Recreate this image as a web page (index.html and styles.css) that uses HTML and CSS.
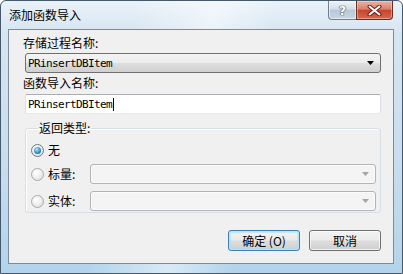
FILE: index.html
```html
<!DOCTYPE html>
<html>
<head>
<meta charset="utf-8">
<link rel="stylesheet" href="styles.css">
</head>
<body>
<div class="window">
  <div class="titlebar">
    <span class="title">添加函数导入</span>
    <div class="caption">
      <div class="cap-btn help"><span>?</span></div>
      <div class="cap-btn close">
        <svg width="15" height="11" viewBox="0 0 15 11"><path d="M2.5 1.5 L12.5 9.5 M12.5 1.5 L2.5 9.5" stroke="#6a1f14" stroke-width="4" stroke-linecap="round"/><path d="M2.5 1.5 L12.5 9.5 M12.5 1.5 L2.5 9.5" stroke="#ffffff" stroke-width="2" stroke-linecap="round"/></svg>
      </div>
    </div>
  </div>
  <div class="client">
    <div class="label">存储过程名称:</div>
    <div class="combo">
      <span class="mono">PRinsertDBItem</span>
      <svg class="arrow" width="7" height="4" viewBox="0 0 7 4"><path d="M0 0 H7 L3.5 4 Z" fill="#000"/></svg>
    </div>
    <div class="label second">函数导入名称:</div>
    <div class="textbox"><span class="mono">PRinsertDBItem</span><span class="caret"></span></div>
    <fieldset class="group">
      <legend>返回类型:</legend>
      <div class="row first">
        <span class="radio on"></span>
        <span class="rtext">无</span>
      </div>
      <div class="row">
        <span class="radio"></span>
        <span class="rtext fixed">标量:</span>
        <div class="combo disabled">
          <svg class="arrow" width="7" height="4" viewBox="0 0 7 4"><path d="M0 0 H7 L3.5 4 Z" fill="#a4a4a4"/></svg>
        </div>
      </div>
      <div class="row third">
        <span class="radio"></span>
        <span class="rtext fixed">实体:</span>
        <div class="combo disabled">
          <svg class="arrow" width="7" height="4" viewBox="0 0 7 4"><path d="M0 0 H7 L3.5 4 Z" fill="#a4a4a4"/></svg>
        </div>
      </div>
    </fieldset>
    <div class="buttons">
      <div class="btn default">确定 (O)</div>
      <div class="btn">取消</div>
    </div>
  </div>
</div>
</body>
</html>
```

FILE: styles.css
```css
html, body {
  margin: 0;
  padding: 0;
  background: #ffffff;
}
body {
  font-family: "Noto Sans CJK SC", "Noto Sans", sans-serif;
  font-size: 12px;
  color: #000;
}
.window {
  width: 403px;
  height: 274px;
  box-sizing: border-box;
  border: 1px solid #46596c;
  border-radius: 6px 6px 0 0;
  display: flex;
  flex-direction: column;
  background:
    linear-gradient(100deg, rgba(255,255,255,0) 30%, rgba(255,255,255,0.5) 48%, rgba(255,255,255,0) 62%),
    linear-gradient(180deg, #eaf2f9 0%, #d6e5f1 12%, #c8ddee 60%, #b2d4ea 100%);
}
.titlebar {
  height: 28px;
  display: flex;
  align-items: flex-start;
  flex: none;
}
.title {
  margin-top: 7px;
  margin-left: 8px;
  line-height: 14px;
  font-size: 12px;
  color: #000;
}
.caption {
  margin-left: auto;
  margin-right: 9px;
  display: flex;
}
.cap-btn {
  height: 19px;
  box-sizing: border-box;
  display: flex;
  align-items: center;
  justify-content: center;
}
.help {
  width: 28px;
  border: 1px solid #6f7f8f;
  border-top: none;
  border-right: none;
  border-radius: 0 0 0 4px;
  background: linear-gradient(180deg, #eef3f8 0%, #d4dfe9 45%, #b9c8d6 50%, #c8d6e2 100%);
  box-shadow: inset 0 0 0 1px rgba(255,255,255,0.5);
}
.help span {
  font-family: "DejaVu Sans", sans-serif;
  font-weight: bold;
  font-size: 13px;
  line-height: 13px;
  color: #ffffff;
  text-shadow: 0 0 1px #3a4a5a, 0 0 1px #3a4a5a, 0 0 1px #3a4a5a;
}
.close {
  width: 37px;
  border: 1px solid #6a2b20;
  border-top: none;
  border-radius: 0 0 4px 0;
  background: linear-gradient(180deg, #eab2a4 0%, #d9806d 45%, #c5462f 52%, #d26a50 100%);
  box-shadow: inset 0 0 0 1px rgba(255,220,210,0.45);
}
.client {
  flex: 1;
  margin: 0 8px 9px 7px;
  border: 1px solid #7d8c9a;
  background: #f0f0f0;
  display: flex;
  flex-direction: column;
  padding: 0 12px 0 16px;
}
.label {
  margin-top: 6px;
  margin-left: -2px;
  line-height: 14px;
  height: 14px;
}
.label.second {
  margin-top: 3px;
}
.mono {
  font-family: "DejaVu Sans Mono", "Liberation Mono", monospace;
  font-size: 11px;
  letter-spacing: -0.62px;
}
.combo {
  margin-top: 3px;
  height: 20px;
  box-sizing: border-box;
  border: 1px solid #707070;
  border-radius: 3px;
  background: linear-gradient(180deg, #f4f4f4 0%, #ececec 48%, #dedede 52%, #d0d0d0 100%);
  display: flex;
  align-items: center;
  padding: 0 6px 0 2px;
}
.combo .arrow {
  margin-left: auto;
}
.textbox {
  margin-top: 4px;
  height: 20px;
  box-sizing: border-box;
  border: 1px solid #abadb3;
  border-left-color: #dbdfe6;
  border-right-color: #dbdfe6;
  border-bottom-color: #e3e9ef;
  border-radius: 2px;
  background: #ffffff;
  display: flex;
  align-items: center;
  padding: 0 2px;
}
.caret {
  width: 1px;
  height: 13px;
  background: #000;
  margin-left: 1px;
}
.group {
  margin: 7px 0 0 0;
  padding: 0 4px 1px 5px;
  border: 1px solid #d5dfe5;
  border-radius: 3px;
  box-shadow: inset 1px 1px 0 #ffffff;
  min-width: 0;
}
.group legend {
  margin-left: 7px;
  padding: 0 1px;
  line-height: 14px;
  font-size: 12px;
}
.row {
  display: flex;
  align-items: center;
  height: 20px;
  margin-top: 4px;
}
.row.first {
  margin-top: 5px;
}
.row.third {
  margin-top: 7px;
}
.radio {
  width: 13px;
  height: 13px;
  box-sizing: border-box;
  border-radius: 50%;
  border: 1px solid #a9a9a9;
  background: radial-gradient(circle at 40% 35%, #ffffff 0%, #ececec 55%, #d6d6d6 100%);
  display: flex;
  align-items: center;
  justify-content: center;
  flex: none;
}
.radio.on {
  border-color: #6c7b88;
}
.radio.on::after {
  content: "";
  width: 7px;
  height: 7px;
  border-radius: 50%;
  background: radial-gradient(circle at 40% 35%, #bfe6fb 0%, #3a97d2 50%, #0f4f83 100%);
}
.rtext {
  margin-left: 4px;
  line-height: 14px;
}
.rtext.fixed {
  width: 42px;
  flex: none;
}
.combo.disabled {
  margin-top: 0;
  flex: 1;
  border-color: #b1b5b9;
  background: #f4f4f4;
  box-shadow: inset 0 0 0 1px #fbfbfb;
}
.buttons {
  margin-top: 17px;
  display: flex;
  justify-content: flex-end;
  gap: 9px;
}
.btn {
  width: 72px;
  height: 21px;
  box-sizing: border-box;
  border: 1px solid #707070;
  border-radius: 3px;
  background: linear-gradient(180deg, #f2f2f2 0%, #ebebeb 48%, #dddddd 52%, #cfcfcf 100%);
  box-shadow: inset 0 0 0 1px rgba(255,255,255,0.7);
  display: flex;
  align-items: center;
  justify-content: center;
  line-height: 14px;
}
.btn.default {
  border-color: #3c7fb1;
  box-shadow: inset 0 0 0 1px #b7e6fb, inset 0 0 0 2px rgba(160,220,245,0.5);
}
```
